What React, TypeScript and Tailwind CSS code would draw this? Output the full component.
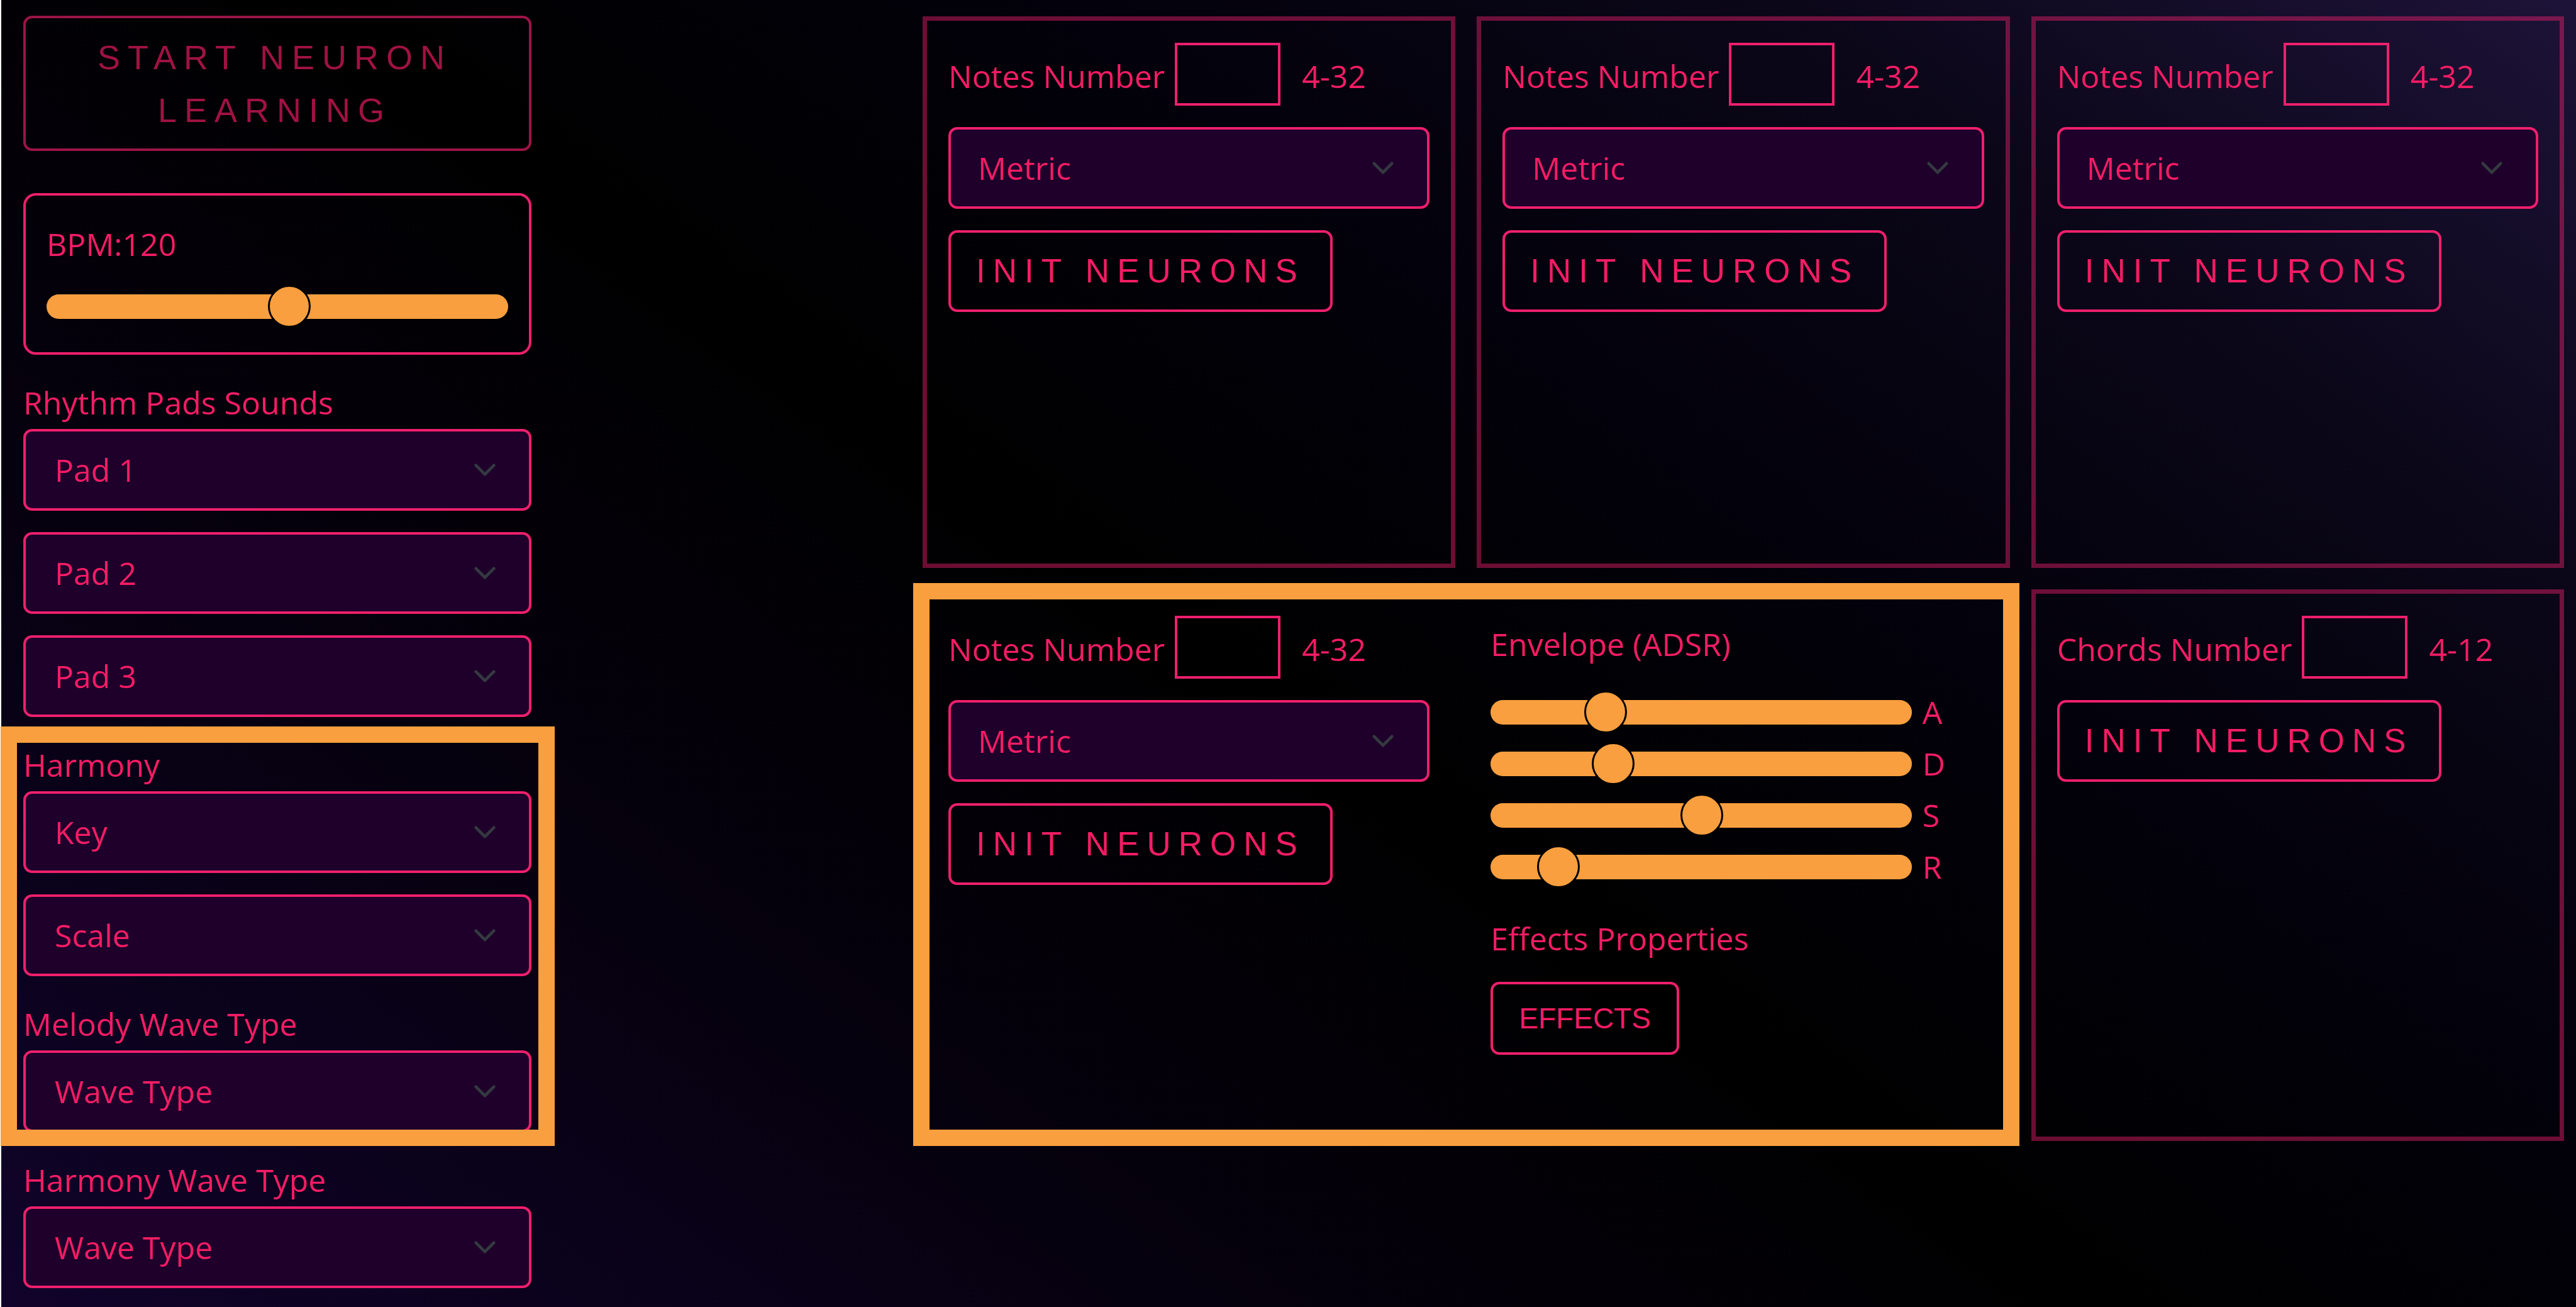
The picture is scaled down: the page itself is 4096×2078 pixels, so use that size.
import { useState } from "react";
import type { ReactNode } from "react";

const PAGE_BG =
  "bg-[linear-gradient(36deg,#11032b_0%,#06010f_26%,#000000_48%,#03010b_66%,#0b0719_82%,#1d1338_100%)]";

const RANGE =
  "block h-[68px] w-full min-w-0 cursor-pointer appearance-none bg-transparent outline-none " +
  "[&::-webkit-slider-runnable-track]:h-[39px] [&::-webkit-slider-runnable-track]:rounded-full [&::-webkit-slider-runnable-track]:bg-[#f99f3f] " +
  "[&::-webkit-slider-thumb]:-mt-[15px] [&::-webkit-slider-thumb]:size-[68px] [&::-webkit-slider-thumb]:appearance-none [&::-webkit-slider-thumb]:rounded-full [&::-webkit-slider-thumb]:border-[3px] [&::-webkit-slider-thumb]:border-black [&::-webkit-slider-thumb]:bg-[#f99f3f]";

function Select({ label, pad }: { label: string; pad: string }) {
  return (
    <div className="relative">
      <select
        aria-label={label}
        className={`block h-[130px] w-full appearance-none rounded-[14px] border-4 border-[#ee1f6c] bg-[#1f002b] pr-[110px] text-[50px] outline-none ${pad}`}
      >
        <option>{label}</option>
      </select>
      <svg
        viewBox="0 0 16 16"
        aria-hidden="true"
        className="pointer-events-none absolute top-0 right-[55px] h-[130px] w-[38px]"
        fill="none"
        stroke="#343a40"
        strokeWidth="2"
        strokeLinecap="round"
        strokeLinejoin="round"
      >
        <path d="m2 5 6 6 6-6" />
      </svg>
    </div>
  );
}

function SidebarGroup({ title, options }: { title: string; options: string[] }) {
  return (
    <section>
      <h2 className="leading-[84px]">{title}</h2>
      <div className="flex flex-col gap-[34px]">
        {options.map((o) => (
          <Select key={o} label={o} pad="pl-[46px]" />
        ))}
      </div>
    </section>
  );
}

function InitButton() {
  return (
    <button
      type="button"
      className="h-[130px] self-start rounded-[14px] border-4 border-[#ee1f6c] px-[40px] font-['Liberation_Sans',sans-serif] text-[53px] tracking-[12px] whitespace-nowrap"
    >
      INIT NEURONS
    </button>
  );
}

function NeuronControls({
  id,
  label,
  range,
  metric = true,
}: {
  id: string;
  label: string;
  range: string;
  metric?: boolean;
}) {
  return (
    <div className="flex flex-col gap-[34px]">
      <div className="flex items-end leading-[94px] whitespace-nowrap">
        <label htmlFor={id}>{label}</label>
        <input
          id={id}
          type="text"
          inputMode="numeric"
          className="mr-[34px] ml-[16px] h-[100px] w-[168px] border-4 border-[#ee1f6c] bg-transparent px-4 outline-none"
        />
        <span>{range}</span>
      </div>
      {metric && <Select label="Metric" pad="pl-[43px]" />}
      <InitButton />
    </div>
  );
}

function Card({ children }: { children: ReactNode }) {
  return (
    <section className="border-[7px] border-[#ee1f6c]/45 px-[34px] py-[35px]">{children}</section>
  );
}

function Highlight({ place }: { place: string }) {
  return (
    <div
      aria-hidden="true"
      className={`pointer-events-none absolute border-[26px] border-[#f99f3f] ${place}`}
    />
  );
}

const ENVELOPE = [
  { name: "A", value: 0.248 },
  { name: "D", value: 0.268 },
  { name: "S", value: 0.502 },
  { name: "R", value: 0.122 },
];

export default function App() {
  const [bpm, setBpm] = useState(120);

  return (
    <main
      className={`grid min-h-screen grid-cols-[808fr_2610fr] gap-x-[622px] border-l-2 border-white pt-[25px] pr-[19px] pb-[30px] pl-[35px] font-['Open_Sans',sans-serif] text-[50px] text-[#f41c64] ${PAGE_BG}`}
    >
      <aside className="flex flex-col gap-[34px]">
        <button
          type="button"
          disabled
          className="mb-[33px] rounded-[14px] border-4 border-[#ee1f6c] pt-[20px] pr-[44px] pb-[19px] pl-[36px] font-['Liberation_Sans',sans-serif] text-[54px] leading-[84px] tracking-[12px] opacity-65"
        >
          START NEURON LEARNING
        </button>

        <div className="rounded-[20px] border-4 border-[#ee1f6c] px-[33px] pt-[35px] pb-[39px]">
          <label htmlFor="bpm" className="mb-[23px] block leading-[84px]">
            BPM:{bpm}
          </label>
          <input
            id="bpm"
            type="range"
            min={0}
            max={227}
            value={bpm}
            onChange={(e) => setBpm(Number(e.target.value))}
            className={RANGE}
          />
        </div>

        <SidebarGroup title="Rhythm Pads Sounds" options={["Pad 1", "Pad 2", "Pad 3"]} />

        <div className="relative flex flex-col gap-[34px]">
          <SidebarGroup title="Harmony" options={["Key", "Scale"]} />
          <SidebarGroup title="Melody Wave Type" options={["Wave Type"]} />
          <Highlight place="-top-[19px] -right-[37px] -bottom-[22px] -left-[36px]" />
        </div>

        <SidebarGroup title="Harmony Wave Type" options={["Wave Type"]} />
      </aside>

      <div className="grid auto-rows-[minmax(877px,auto)] grid-cols-3 content-start gap-[34px] pt-px">
        <Card>
          <NeuronControls id="notes-1" label="Notes Number" range="4-32" />
        </Card>
        <Card>
          <NeuronControls id="notes-2" label="Notes Number" range="4-32" />
        </Card>
        <Card>
          <NeuronControls id="notes-3" label="Notes Number" range="4-32" />
        </Card>

        <section className="relative col-span-2 grid grid-cols-2 gap-[34px]">
          <div className="px-[41px] py-[42px]">
            <NeuronControls id="notes-4" label="Notes Number" range="4-32" />
          </div>
          <div className="flex flex-col pt-[45px] pr-[103px] pl-[22px]">
            <h2 className="mb-[25px] leading-[84px]">Envelope (ADSR)</h2>
            {ENVELOPE.map((e) => (
              <div key={e.name} className="flex h-[82px] items-center gap-[17px]">
                <input
                  id={`env-${e.name}`}
                  type="range"
                  min={0}
                  max={1}
                  step={0.001}
                  defaultValue={e.value}
                  className={RANGE}
                />
                <label htmlFor={`env-${e.name}`} className="w-[36px] shrink-0">
                  {e.name}
                </label>
              </div>
            ))}
            <h2 className="mt-[31px] mb-[27px] leading-[84px]">Effects Properties</h2>
            <button
              type="button"
              className="h-[116px] self-start rounded-[14px] border-4 border-[#ee1f6c] px-[41px] font-['Liberation_Sans',sans-serif] text-[46px]"
            >
              EFFECTS
            </button>
          </div>
          <Highlight place="-top-[10px] -right-[15px] -bottom-[8px] -left-[15px]" />
        </section>

        <Card>
          <NeuronControls id="chords" label="Chords Number" range="4-12" metric={false} />
        </Card>
      </div>
    </main>
  );
}
